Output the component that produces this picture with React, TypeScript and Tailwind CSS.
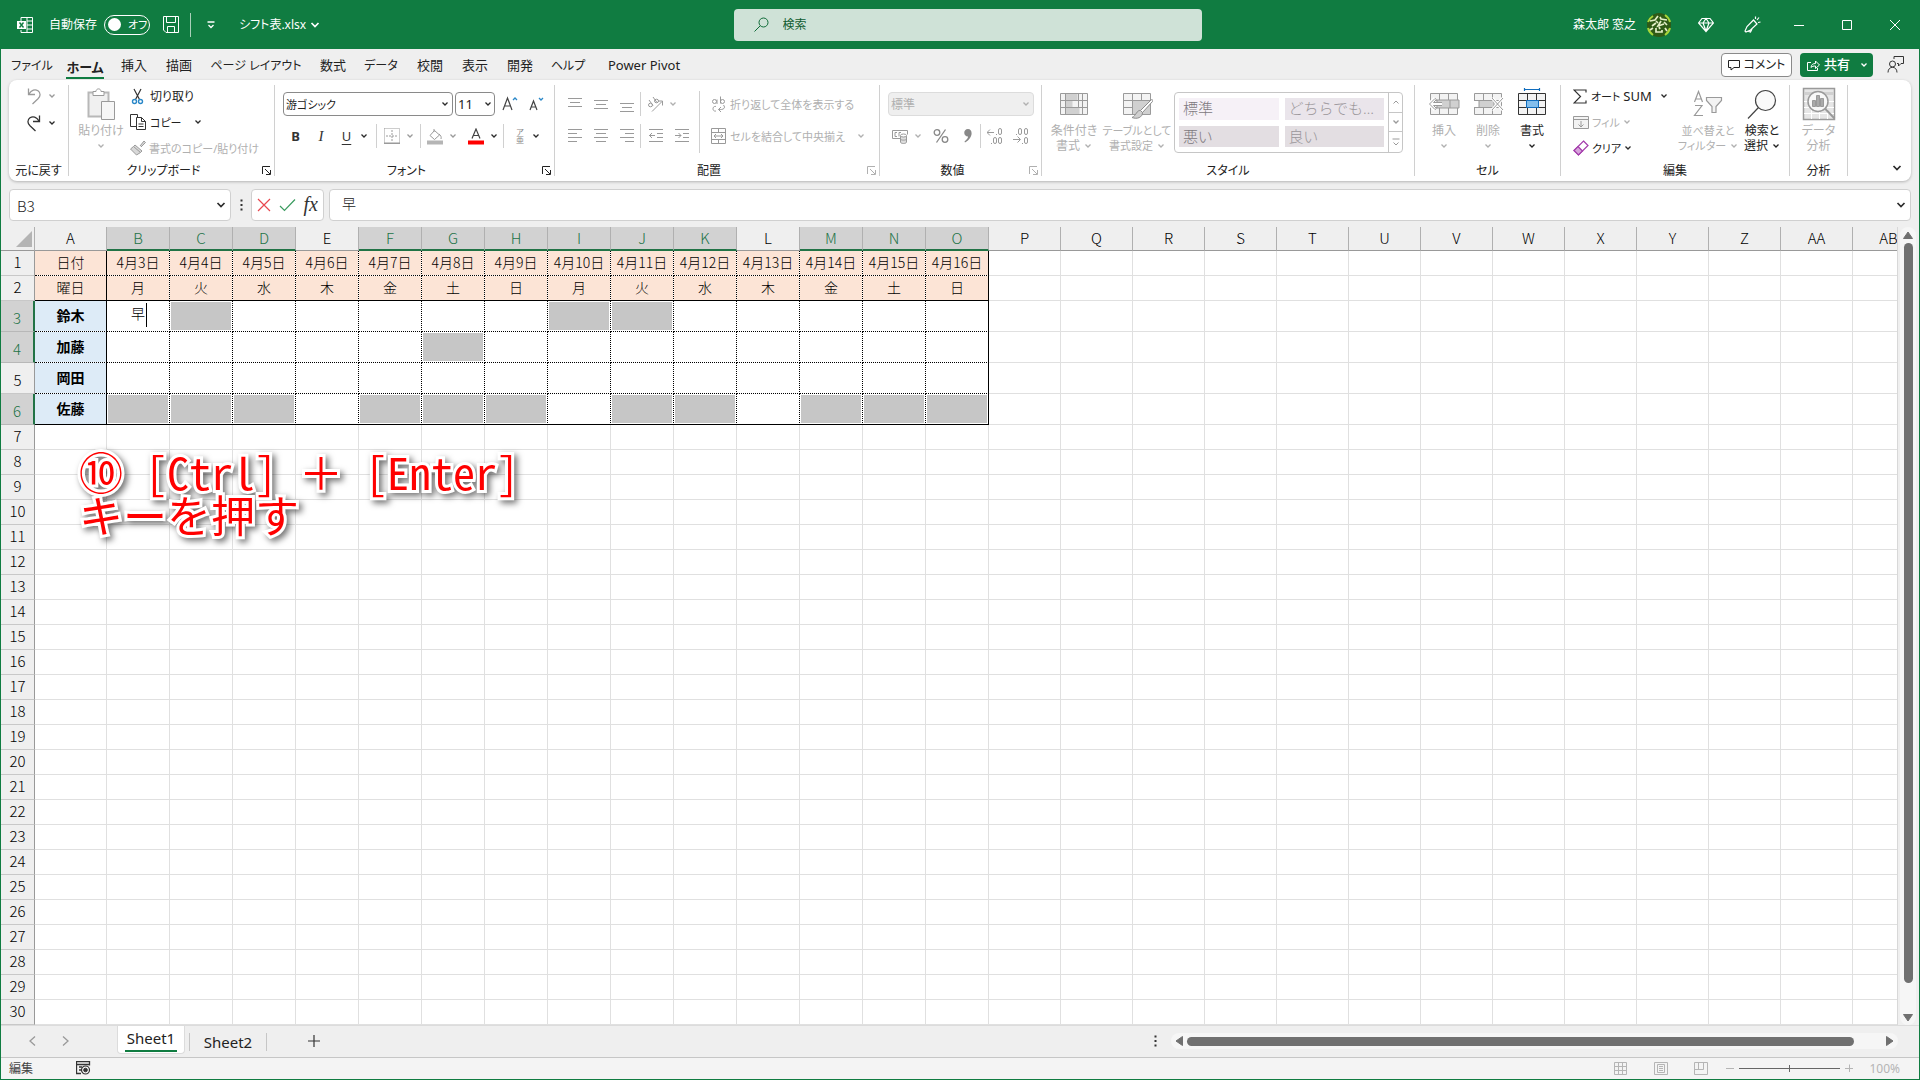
import React from "react";

type Kids = { children?: React.ReactNode };
const BLUE = "#2b88c8";

/* ---------- small shared pieces ---------- */

function Chevron({ className = "text-[#2b2b2b]" }: { className?: string }) {
  return (
    <svg width="8" height="6" viewBox="0 0 8 6" className={"shrink-0 " + className} fill="none" stroke="currentColor" strokeWidth="1.3" aria-hidden="true">
      <path d="M1.5 1.5 4 4l2.5-2.5" />
    </svg>
  );
}

function BigChevron({ className = "text-[#2b2b2b]" }: { className?: string }) {
  return (
    <svg width="10" height="8" viewBox="0 0 10 8" className={"shrink-0 " + className} fill="none" stroke="currentColor" strokeWidth="1.7" aria-hidden="true">
      <path d="M1.5 2 5 5.5 8.5 2" />
    </svg>
  );
}

function Ico({ w = 16, h = 16, className = "text-[#9a9a9a]", children }: Kids & { w?: number; h?: number; className?: string }) {
  return (
    <svg width={w} height={h} viewBox={`0 0 ${w} ${h}`} fill="none" stroke="currentColor" strokeWidth="1" className={"shrink-0 " + className} aria-hidden="true">
      {children}
    </svg>
  );
}

function Group({ label, width, launcher, children }: Kids & { label: string; width: string; launcher?: string }) {
  return (
    <>
      <section aria-label={label} className={"flex h-[101px] shrink-0 flex-col " + width}>
        <div className="h-[79px]">{children}</div>
        <div className="flex h-[22px] items-center">
          <span className="flex flex-1 justify-center whitespace-nowrap">{label}</span>
          {launcher && (
            <button aria-label={label + "の設定"} className={launcher}>
              <Ico w={9} h={9} className=""><path d="M.5 8V.5H8M3 3l5 5M8.500 4v4.500H4" /></Ico>
            </button>
          )}
        </div>
      </section>
      <div className="my-[5px] w-px shrink-0 bg-[#d0d0d0]" />
    </>
  );
}

function Lines({ rows, align }: { rows: number[]; align: "l" | "c" | "r" }) {
  return (
    <Ico w={14} h={16}>
      {rows.map((y, i) => {
        const short = i % 2 === 1;
        const x = !short ? 0 : align === "l" ? 0 : align === "c" ? 2 : 5;
        const e = !short ? 14 : align === "l" ? 9 : align === "c" ? 12 : 14;
        return <path key={y} d={`M${x} ${y}.5H${e}`} />;
      })}
    </Ico>
  );
}

function IconBtn({ label, className = "w-[26px]", children }: Kids & { label: string; className?: string }) {
  return (
    <button aria-label={label} className={"flex h-[24px] shrink-0 items-center justify-center gap-[6px] " + className}>
      {children}
    </button>
  );
}

function Sep() {
  return <span className="h-[24px] w-px shrink-0 bg-[#d0d0d0]" />;
}

function Big({ icon, lines, width, chev = "inline", className = "text-[#b0b0b0]" }: { icon: React.ReactNode; lines: string[]; width: string; chev?: "inline" | "below" | "none"; className?: string }) {
  return (
    <button className={"flex shrink-0 flex-col items-center whitespace-nowrap leading-[15px] " + width + " " + className}>
      <span className="flex h-[43px] items-center pt-[5px]">{icon}</span>
      {lines.map((l, i) => (
        <span key={l} className="flex items-center gap-1">
          {l}
          {chev === "inline" && i === lines.length - 1 && <Chevron className="" />}
        </span>
      ))}
      {chev === "below" && <span className="flex h-[15px] items-center"><Chevron className="" /></span>}
    </button>
  );
}

/* ---------- title bar ---------- */

function TitleBar() {
  return (
    <header className="flex h-[49px] shrink-0 items-center bg-[#107c41] text-white">
      <div className="flex flex-1 items-center pl-4">
        <Ico w={16} h={18} className="text-white">
          <path d="M4 4V1.500h11.500v15H4V14M4 6V4M10 1.500v15M10 5h5.500M10 9h5.500M10 13h5.500" />
          <path d="M0 5h9v8H0z" fill="white" stroke="none" />
          <path d="m2.500 6.500 4 5M6.500 6.500l-4 5" stroke="#107c41" strokeWidth="1.400" />
        </Ico>
        <label htmlFor="autosave" className="ml-4">自動保存</label>
        <button id="autosave" role="switch" aria-checked="false" className="ml-[7px] flex h-5 w-[46px] items-center gap-[7px] rounded-full border border-white pl-[3px] text-[11px]">
          <span className="size-[13px] rounded-full bg-white" />
          オフ
        </button>
        <button aria-label="保存" className="ml-[13px]">
          <Ico w={16} h={17} className="text-white"><path d="M.5.5h15v16H3L.5 14zM3.500.5v6h9v-6M4.500 16.500v-6h7v6" /></Ico>
        </button>
        <span className="ml-[11px] h-[24px] w-px bg-[#a9d0b9]" />
        <button aria-label="クイック アクセス ツール バーのカスタマイズ" className="ml-4">
          <Ico w={8} h={8} className="text-white"><path d="M.5 1h7M1.500 4 4 6.500 6.500 4" strokeWidth="1.300" /></Ico>
        </button>
        <button className="ml-[24px] flex items-center gap-1">
          シフト表.xlsx <BigChevron className="text-white" />
        </button>
      </div>
      <label className="ml-[18px] flex h-8 w-[468px] items-center gap-[14px] rounded bg-[#cfe2d7] pl-5 text-[#0f5c32]">
        <Ico w={15} h={15} className="text-[#0f6b38]"><circle cx="9.500" cy="5.500" r="4.500" /><path d="M6.200 8.800.5 14.500" /></Ico>
        <input aria-label="検索" placeholder="検索" className="flex-1 bg-transparent placeholder:text-[#0f5c32]" />
      </label>
      <div className="flex flex-1 items-center justify-end pr-[19px]">
        <span>森太郎 窓之</span>
        <svg width="24" height="24" viewBox="0 0 24 24" className="ml-[11px]" aria-label="アカウント">
          <circle cx="12" cy="12" r="12" fill="#2f5a16" />
          <path d="M1 9a12 12 0 0 1 5-6M18 2a12 12 0 0 1 5 7M23 15a12 12 0 0 1-5 7M6 22a12 12 0 0 1-5-7" stroke="#a6d63a" strokeWidth="2" fill="none" />
          <path d="M3 8l5-1 3-4M13 4l1 2 6 1M5 13l4-3M14 8l-3 5 6-2M17 9l3 3M9 8l2 2M3 17l3-2M9 15v4h6v-2M12 14l1 2M18 15l2 3" stroke="#e4efc8" strokeWidth="1.700" fill="none" />
        </svg>
        <button aria-label="プレミアム" className="ml-[27px]">
          <Ico w={16} h={16} className="text-white"><path d="M4 1.500h8L15.500 6 8 14.500.5 6zM.5 6h15M5 6l3 8 3-8-3-4.500z" strokeWidth="1.200" /></Ico>
        </button>
        <button aria-label="新機能" className="ml-[30px]">
          <Ico w={17} h={17} className="text-white"><path d="m9.500 4 3.500 4-6.500 6-4.500 2-1-1 2-4.500zM4.500 15.500l2 .5 1.500-3M11.500 3V.5M13 4l2-2.500M14 6.500l2.500-.5" strokeWidth="1.200" /></Ico>
        </button>
        <button aria-label="最小化" className="ml-[33px]"><Ico w={10} h={10} className="text-white"><path d="M0 5.500h10" /></Ico></button>
        <button aria-label="最大化" className="ml-[38px]"><Ico w={10} h={10} className="text-white"><path d="M.5.5h9v9h-9z" /></Ico></button>
        <button aria-label="閉じる" className="ml-[38px]"><Ico w={10} h={10} className="text-white"><path d="m0 0 10 10M10 0 0 10" /></Ico></button>
      </div>
    </header>
  );
}

/* ---------- ribbon tabs ---------- */

const TABS: [string, string][] = [
  ["ファイル", "w-[46px] text-[12px]"], ["ホーム", "w-[60px]"], ["挿入", "w-[38px]"], ["描画", "w-[52px]"], ["ページ レイアウト", "w-[102px] text-[12px]"], ["数式", "w-[52px]"],
  ["データ", "w-[44px] text-[12px]"], ["校閲", "w-[54px]"], ["表示", "w-[36px]"], ["開発", "w-[54px]"], ["ヘルプ", "w-[42px] text-[12px]"], ["Power Pivot", "w-[110px]"],
];

function TabRow() {
  return (
    <nav className="flex h-[31px] shrink-0 items-center pl-[8px] text-[13px]">
      {TABS.map(([t, w]) => (
        <button key={t} className={"flex h-[31px] items-center justify-center whitespace-nowrap " + w}>
          <span className={t === "ホーム" ? "border-b-2 border-[#107c41] pt-[7px] leading-[19px] font-bold" : "pt-px"}>{t}</span>
        </button>
      ))}
      <span className="flex-1" />
      <button className="flex h-6 w-[71px] items-center justify-center gap-1 rounded border border-[#8a8a8a] bg-white text-[12px]">
        <Ico w={12} h={12} className="text-[#222]"><path d="M.5 1.500h11v7H6l-3 2.500V8.500H.5z" /></Ico>
        コメント
      </button>
      <button className="mx-2 flex h-6 w-[73px] items-center rounded bg-[#107c41] pl-[7px] text-white">
        <Ico w={13} h={12} className="text-white"><path d="M4 3.500H.5v8h10V9M4 8.500c.3-3 2-4 4.500-4V2l4 4-4 3.500V7C6.500 7 5 7.300 4 8.500z" /></Ico>
        <span className="ml-1 font-medium">共有</span>
        <span className="ml-[10px]"><Chevron className="text-white" /></span>
      </button>
      <button aria-label="ユーザー" className="mr-[15px] ml-[6px]">
        <Ico w={17} h={17} className="text-[#333]"><circle cx="5.500" cy="8" r="3" /><path d="M1 16.500c0-7 9-7 9 0M7 3V.5h9.500v7H14L11.500 10V7.500H10" /></Ico>
      </button>
    </nav>
  );
}

/* ---------- ribbon ---------- */

function GridIcon({ cls = "text-[#9a9a9a]", children }: Kids & { cls?: string }) {
  return (
    <Ico w={32} h={32} className={cls}>
      <path d="M2.500 5.500h27v21h-27z" fill="#f3f3f3" />
      <path d="M2.500 12.500h27M2.500 19.500h27M11.500 5.500v21M20.500 5.500v21" strokeWidth="1" />
      {children}
    </Ico>
  );
}

const SCRIPT = "text-[#222] pr-[3px] pl-[4px]";
const SCRIPT_OFF = "text-[#b0b0b0] pr-[3px] pl-[4px]";

function Ribbon() {
  return (
    <div className="mr-[8px] ml-[8px] flex h-[101px] shrink-0 overflow-hidden rounded-lg bg-white shadow-[0_1px_3px_rgba(0,0,0,0.25)]">
      <Group label="元に戻す" width="w-[59px]">
        <div className="flex h-full flex-col pt-1 pl-[16px]">
          <IconBtn label="元に戻す" className="w-[32px]">
            <Ico w={16} h={17} className="text-[#9a9a9a]"><path d="M2.500.5v6H9M3 6C5.500 2 9 .8 12 2.800c3 2.200 2.500 5.500 0 8L6.500 16" strokeWidth="1.300" /></Ico>
            <Chevron className="text-[#9a9a9a]" />
          </IconBtn>
          <div className="mt-[3px]">
            <IconBtn label="やり直し" className="w-[32px]">
              <Ico w={16} h={17} className="text-[#333]"><path d="M13.500.5v6H7M13 6C10.500 2 7 .8 4 2.800c-3 2.200-2.500 5.500 0 8L9.500 16" strokeWidth="1.300" /></Ico>
              <Chevron />
            </IconBtn>
          </div>
        </div>
      </Group>

      <Group label="クリップボード" width="w-[205px]" launcher={SCRIPT}>
        <div className="flex pl-2">
          <Big
            width="w-[48px]" chev="below" lines={["貼り付け"]}
            icon={
              <Ico w={32} h={32}>
                <path d="M3.500 4.500h20v24h-20z" fill="#f0f0f0" stroke="#b8b8b8" strokeWidth="2" />
                <path d="M8 7.500v-4h3c0-3.500 5-3.500 5 0h3v4z" fill="#fff" />
                <path d="M16.500 13.500h13v18h-13z" fill="#f6f6f6" />
              </Ico>
            }
          />
          <div className="flex flex-col gap-[2px] pt-1 pl-[5px]">
            <button className="flex h-[24px] items-center gap-[4px]">
              <Ico w={16} h={17} className="text-[#333]">
                <path d="M4 1l5.500 10.500M11 1 5.500 11.500" strokeWidth="1.200" />
                <circle cx="4.500" cy="13.500" r="2" stroke={BLUE} strokeWidth="1.400" /><circle cx="10.500" cy="13.500" r="2" stroke={BLUE} strokeWidth="1.400" />
              </Ico>
              切り取り
            </button>
            <button className="flex h-[24px] items-center gap-[4px] text-[11px]">
              <Ico w={16} h={16} className="text-[#333]"><path d="M6 12.500H.5V.5h7V3M6.500 15.500v-12h5l4 4v8zM11.500 3.500v4h4M8.500 10h5M8.500 12.500h5" /></Ico>
              コピー <span className="ml-2"><Chevron /></span>
            </button>
            <button className="flex h-[24px] items-center gap-[3px] text-[11px] whitespace-nowrap text-[#b0b0b0]">
              <Ico w={16} h={16}><path d="m10 6 4-5 1.500 1.500L11 7M5 5l7 6-1.500 1.500L3.500 6.500zM3.500 6.500.5 9l6 6 4-2.500" fill="#d8d8d8" /></Ico>
              書式のコピー/貼り付け
            </button>
          </div>
        </div>
      </Group>

      <Group label="フォント" width="w-[279px]" launcher={SCRIPT}>
        <div className="flex flex-col gap-[8px] pt-3 pl-2">
          <div className="flex items-center">
            <label className="flex h-6 w-[170px] items-center rounded border border-[#8a8a8a] pr-[3px] pl-[2px]">
              <select aria-label="フォント名" className="flex-1 appearance-none text-[11px]"><option>游ゴシック</option></select><Chevron />
            </label>
            <label className="ml-[2px] flex h-6 w-[40px] items-center rounded border border-[#8a8a8a] pr-[2px] pl-[2px]">
              <select aria-label="フォント サイズ" className="w-[20px] flex-1 appearance-none text-[13px]"><option>11</option></select><Chevron />
            </label>
            <IconBtn label="フォント サイズの拡大" className="ml-[6px] w-[18px]">
              <Ico w={17} h={16} className="text-[#444]"><path d="m1 14 4.500-12L10 14M2.500 10h6" strokeWidth="1.200" /><path d="m11 4 2-2 2 2" stroke={BLUE} strokeWidth="1.300" /></Ico>
            </IconBtn>
            <IconBtn label="フォント サイズの縮小" className="ml-[8px] w-[18px]">
              <Ico w={17} h={16} className="text-[#444]"><path d="m2 14 3.500-9L9 14M3.500 11h4.500" strokeWidth="1.200" /><path d="m11 2 2 2 2-2" stroke={BLUE} strokeWidth="1.300" /></Ico>
            </IconBtn>
          </div>
          <div className="flex items-center text-[13px] text-[#333]">
            <IconBtn label="太字" className="w-[25px]"><b>B</b></IconBtn>
            <IconBtn label="斜体"><i className="font-['Liberation_Serif',serif] text-[15px]">I</i></IconBtn>
            <IconBtn label="下線" className="w-[42px]"><u className="mr-[3px] underline-offset-[3px]">U</u><Chevron /></IconBtn>
            <Sep />
            <IconBtn label="罫線" className="w-[43px]">
              <Ico w={16} h={16}><path d="M.5.5h15v15M.5.5v15" strokeDasharray="1 1" /><path d="M8 2v12M2 8h12" strokeDasharray="2 1" /><path d="M0 15.500h16" strokeWidth="2" /></Ico>
              <Chevron className="text-[#9a9a9a]" />
            </IconBtn>
            <Sep />
            <IconBtn label="塗りつぶしの色" className="w-[42px]">
              <Ico w={16} h={17}><path d="M7 1v3M3 7.500l4.500-5 5 4.500-5 4.500zM12 6c2 1.500 2.500 3 2 5" /><path d="M0 12.500h16v4H0z" fill="#b5b5b5" stroke="none" /></Ico>
              <Chevron className="text-[#9a9a9a]" />
            </IconBtn>
            <IconBtn label="フォントの色" className="w-[40px]">
              <Ico w={16} h={17} className="text-[#444]"><path d="M4 10.500 8 1l4 9.500M5.500 7.500h5" strokeWidth="1.200" /><path d="M0 12.500h16v4H0z" fill="#f00" stroke="none" /></Ico>
              <Chevron />
            </IconBtn>
            <Sep />
            <IconBtn label="ふりがな" className="w-[46px]">
              <span className="flex w-[12px] flex-col items-center text-[8px] leading-[8px] text-[#888]"><span>ア</span><span>亜</span></span>
              <Chevron />
            </IconBtn>
          </div>
        </div>
      </Group>

      <Group label="配置" width="w-[324px]" launcher={SCRIPT_OFF}>
        <div className="flex pt-3 text-[#b0b0b0]">
          <div className="flex w-[144px] flex-col gap-[8px] pl-[7px]">
            <div className="flex">
              <IconBtn label="上揃え"><Lines rows={[2, 6, 10]} align="c" /></IconBtn>
              <IconBtn label="上下中央揃え"><Lines rows={[4, 8, 12]} align="c" /></IconBtn>
              <IconBtn label="下揃え"><Lines rows={[7, 11, 15]} align="c" /></IconBtn>
              <Sep />
              <IconBtn label="方向" className="w-[42px]">
                <Ico w={16} h={16}>
                  <ellipse cx="3.500" cy="9" rx="2" ry="1.800" /><path d="M2 4l4 5.500M6 1l4 5.500" /><ellipse cx="9.500" cy="5" rx="2" ry="1.800" /><path d="M5 15.500 15 5.500M11 5h4.500v4.500" />
                </Ico>
                <Chevron className="" />
              </IconBtn>
            </div>
            <div className="flex">
              <IconBtn label="左揃え"><Lines rows={[1, 5, 9, 13]} align="l" /></IconBtn>
              <IconBtn label="中央揃え"><Lines rows={[1, 5, 9, 13]} align="c" /></IconBtn>
              <IconBtn label="右揃え"><Lines rows={[1, 5, 9, 13]} align="r" /></IconBtn>
              <Sep />
              <IconBtn label="インデントを減らす" className="ml-[2px] w-[26px]"><Ico w={14} h={16}><path d="M0 1.500h14M8 5.500h6M8 9.500h6M0 13.500h14M0 7.500h6M3 5 .5 7.500 3 10" /></Ico></IconBtn>
              <IconBtn label="インデントを増やす"><Ico w={14} h={16}><path d="M0 1.500h14M8 5.500h6M8 9.500h6M0 13.500h14M0 7.500h6M3.500 5 6 7.500 3.500 10" /></Ico></IconBtn>
            </div>
          </div>
          <span className="mt-[-1px] h-[62px] w-px bg-[#d0d0d0]" />
          <div className="flex flex-col gap-[8px] pl-[11px] text-[11px] whitespace-nowrap">
            <button className="flex h-6 items-center gap-[4px]">
              <Ico w={15} h={17}><circle cx="3.500" cy="5.500" r="2" /><path d="M6 3.500v4.500M9.500.5v7" /><circle cx="11.500" cy="5.500" r="2" /><path d="M5 10.500c-4-1-4 5.500 0 4.500M12.500 9c2.500 3 0 5-5 4.500M10 11l-2.500 2.500L10 16" /></Ico>
              折り返して全体を表示する
            </button>
            <button className="flex h-6 items-center gap-[4px]">
              <Ico w={15} h={16}><path d="M.5.5h14v15H.5zM.5 4.500h14M.5 11.500h14M7.500.5v4M7.500 11.500v4M3 8h9M5 6 3 8l2 2M10 6l2 2-2 2" /></Ico>
              セルを結合して中央揃え <span className="ml-[8px]"><Chevron className="" /></span>
            </button>
          </div>
        </div>
      </Group>

      <Group label="数値" width="w-[161px]" launcher={SCRIPT_OFF}>
        <div className="flex flex-col gap-[8px] pt-3 pl-2 text-[#b0b0b0]">
          <label className="flex h-6 w-[146px] items-center rounded border border-[#dcdcdc] bg-[#efefef] pr-[3px] pl-[2px]">
            <select aria-label="数値の書式" className="flex-1 appearance-none text-[#b0b0b0]"><option>標準</option></select><Chevron className="" />
          </label>
          <div className="flex items-center text-[#888]">
            <IconBtn label="通貨表示形式" className="w-[38px]">
              <Ico w={16} h={15}><path d="M8 9.500H.5v-8h15v4M5 3.500H3v4h2M7 7.500v-4h2" /><path d="M8.500 7v6c0 2 6 2 6 0V7M8.500 10c0 1.500 6 1.500 6 0" fill="#ddd" /><ellipse cx="11.500" cy="6.500" rx="3" ry="1.500" fill="#fff" /></Ico>
              <Chevron className="text-[#b0b0b0]" />
            </IconBtn>
            <IconBtn label="パーセント スタイル" className="w-[30px]">
              <Ico w={16} h={16} className="text-[#888]"><circle cx="4" cy="4.500" r="2.800" strokeWidth="1.300" /><circle cx="12" cy="11.500" r="2.800" strokeWidth="1.300" /><path d="M12.500 1.500 3.500 14.500" strokeWidth="1.300" /></Ico>
            </IconBtn>
            <IconBtn label="桁区切りスタイル" className="w-[24px]">
              <Ico w={10} h={14} className="text-[#888]"><path d="M5 0c5 0 5.500 9-3 13.500l-.5-1C4 10.500 5 9 5 7.500 0 7.500 0 0 5 0z" fill="#888" stroke="none" /></Ico>
            </IconBtn>
            <Sep />
            <IconBtn label="小数点以下の表示桁数を増やす" className="w-[28px]">
              <Ico w={16} h={16}><path d="M0 4.500h7M3 1.500l-3 3 3 3" /><rect x="11.500" y=".5" width="3" height="6" rx="1.500" /><rect x="6.500" y="9.500" width="3" height="6" rx="1.500" /><rect x="11.500" y="9.500" width="3" height="6" rx="1.500" /><path d="M9 6.500h1M4 15.500h1" /></Ico>
            </IconBtn>
            <IconBtn label="小数点以下の表示桁数を減らす" className="w-[24px]">
              <Ico w={16} h={16}><rect x="5.500" y=".5" width="3" height="6" rx="1.500" /><rect x="11.500" y=".5" width="3" height="6" rx="1.500" /><path d="M3 6.500h1M0 11.500h7M4.500 8.500l3 3-3 3M9 15.500h1" /><rect x="11.500" y="9.500" width="3" height="6" rx="1.500" /></Ico>
            </IconBtn>
          </div>
        </div>
      </Group>

      <Group label="スタイル" width="w-[372px]">
        <div className="flex">
          <Big
            width="ml-[2px] w-[60px]" lines={["条件付き", "書式"]}
            icon={<GridIcon><path d="M7.500 6h12v6h-12zM7.500 13h7v6h-7zM7.500 20h14v6h-14z" fill="#d0d0d0" stroke="none" /><path d="M7.500 5.500v21M24.500 5.500v21" /></GridIcon>}
          />
          <Big
            width="w-[66px] text-[11px]" lines={["テーブルとして", "書式設定"]}
            icon={<GridIcon><path d="M12 13h17v13H12z" fill="#d0d0d0" stroke="none" /><path d="m30 12-10.500 10.500 2 2L31.500 13.500c1-1.500-.5-2.500-1.500-1.500z" fill="#fff" stroke="#8c8c8c" /><path d="M19.500 22.500c-4-.5-4 5-8.500 7 5 2 10.500 0 10.500-5z" fill="#d0d0d0" stroke="#8c8c8c" /></GridIcon>}
          />
          <div className="mt-3 ml-[4px] flex h-[61px] w-[229px] overflow-hidden rounded border border-[#c6c6c6] text-[15px] font-light">
            <div className="grid flex-1 grid-cols-2 gap-[6px] p-1 pt-[5px] pb-[5px] text-left text-[#9a969a]">
              <button className="truncate bg-[#f6f1f7] pb-[2px] pl-1 text-left leading-[20px] text-[#7d787d]">標準</button>
              <button className="truncate bg-[#eae5eb] pb-[2px] pl-1 text-left leading-[20px] [font-feature-settings:normal]">どちらでも…</button>
              <button className="truncate bg-[#e3dee2] pb-[2px] pl-1 text-left leading-[20px] text-[#7d787d]">悪い</button>
              <button className="truncate bg-[#e3dee2] pb-[2px] pl-1 text-left leading-[20px]">良い</button>
            </div>
            <div className="grid w-[14px] grid-rows-3 divide-y divide-[#c6c6c6] border-l border-[#c6c6c6] text-[#9a9a9a]">
              <button aria-label="上へ" className="flex items-center justify-center"><Ico w={8} h={6} className=""><path d="M1.500 4.500 4 2l2.500 2.500" /></Ico></button>
              <button aria-label="下へ" className="flex items-center justify-center"><Chevron className="" /></button>
              <button aria-label="その他" className="flex items-center justify-center"><Ico w={8} h={8} className=""><path d="M.5 1h7M1.500 4.500 4 7l2.500-2.500" /></Ico></button>
            </div>
          </div>
        </div>
      </Group>

      <Group label="セル" width="w-[145px]">
        <div className="flex pl-[7px]">
          <Big
            width="w-[44px]" chev="below" lines={["挿入"]}
            icon={<GridIcon><path d="M9 12h22v8H9z" fill="#d0d0d0" /><path d="M22 12v8" /><path d="M14 16H2M7 10.500 1.500 16 7 21.500" stroke="#fff" strokeWidth="4" /><path d="M14 14.500H5.500l3-3-1.500-1L1.500 16 7 21.500l1.500-1-3-3H14" fill="#fff" /></GridIcon>}
          />
          <Big
            width="w-[44px]" chev="below" lines={["削除"]}
            icon={<GridIcon><path d="M0 13h7v6H0z" fill="#fff" stroke="none" /><path d="M7 12.500h15v7H7z" fill="#d0d0d0" /><path d="m20 10 11 12M31 10 20 22" stroke="#fff" strokeWidth="3" /><path d="m20 10 11 12M31 10 20 22" /></GridIcon>}
          />
          <Big
            width="w-[44px]" chev="below" lines={["書式"]} className="text-[#222]"
            icon={<GridIcon cls="text-[#333]"><path d="M10.500 12.500h12v7h-12z" fill="#83beec" stroke="#0f6cbd" /><path d="M8.500 1.500h15M8.500 0v3M23.500 0v3" stroke="#0f6cbd" strokeWidth="1.200" /></GridIcon>}
          />
        </div>
      </Group>

      <Group label="編集" width="w-[228px]">
        <div className="flex">
          <div className="flex w-[120px] flex-col gap-[2px] pt-1 pl-[12px]">
            <button className="flex h-[24px] items-center gap-[4px] text-[11px] whitespace-nowrap">
              <Ico w={14} h={15} className="text-[#333]"><path d="M13 3.500V1H1l6.500 6.500L1 14h12v-2.500" strokeWidth="1.200" /></Ico>
              <span>オート <span className="text-[13px]">SUM</span></span> <span className="ml-[4px]"><Chevron /></span>
            </button>
            <button className="flex h-[24px] items-center gap-[3px] text-[11px] text-[#b0b0b0]">
              <Ico w={16} h={15}><path d="M.5 1.500h15v12H.5z" fill="#f3f3f3" /><path d="M.5 4.500h15M8 6v6M5.500 9.500 8 12l2.500-2.500" /></Ico>
              フィル <Chevron className="" />
            </button>
            <button className="flex h-[24px] items-center gap-[3px] text-[11px]">
              <Ico w={16} h={16} className="text-[#a33bab]"><path d="m10.500 1 4.500 4.500L5.500 15 1 10.500z" fill="#fff" strokeWidth="1.200" /><path d="m5 6.500 4.500 4.500-4 4L1 10.500z" fill="#d6a3da" strokeWidth="1.200" /></Ico>
              クリア <Chevron />
            </button>
          </div>
          <Big
            width="w-[54px] text-[11px]" lines={["並べ替えと", "フィルター"]}
            icon={<Ico w={30} h={32}><path d="m1.500 14 4-10.500 4 10.500M3 11h5M2 17.500h7l-7.500 10h8.500" strokeWidth="1.200" /><path d="M13.500 9.500h15v3l-5.500 6v6h-4v-6l-5.500-6z" fill="#f3f3f3" strokeWidth="1.200" /></Ico>}
          />
          <Big
            width="w-[54px]" lines={["検索と", "選択"]} className="text-[#222]"
            icon={<Ico w={32} h={32} className="text-[#444]"><circle cx="19.500" cy="12.500" r="10" fill="#fafafa" strokeWidth="1.200" /><path d="M12.500 19.500 2 30.500" strokeWidth="1.200" /></Ico>}
          />
        </div>
      </Group>

      <Group label="分析" width="w-[57px]">
        <Big
          width="w-full" chev="none" lines={["データ", "分析"]}
          icon={
            <Ico w={34} h={34}>
              <path d="M1.500 1.500h31v31h-31z" fill="#e6e6e6" strokeWidth="1.500" /><path d="M2 6.500h30" strokeWidth="3" stroke="#d0d0d0" /><path d="M2 14.500h30M2 20.500h30M2 26.500h30M9.500 22v10M17.500 22v10M25.500 22v10" stroke="#fff" />
              <circle cx="16" cy="14.500" r="10" fill="#f8f8f8" strokeWidth="1.500" /><path d="M23 21.500 32.500 31.500" strokeWidth="2" /><path d="M10.500 13.500h3v6h-3zM14.500 8.500h3v11h-3zM18.500 11.500h3v8h-3z" fill="#aaa" />
            </Ico>
          }
        />
      </Group>

      <div className="flex flex-1 items-end justify-end pr-[9px] pb-[9px]">
        <button aria-label="リボンを折りたたむ"><BigChevron /></button>
      </div>
    </div>
  );
}

/* ---------- formula bar ---------- */

function Dots() {
  return <Ico w={3} h={12} className="text-[#333]"><path d="M.5.500h2v2h-2zM.5 5h2v2h-2zM.5 9.500h2v2h-2z" fill="currentColor" stroke="none" /></Ico>;
}

function FormulaBar() {
  return (
    <div className="flex shrink-0 items-center px-[8px] pt-2 pb-[6px]">
      <label className="flex h-8 w-[222px] items-center rounded border border-[#d0d0d0] bg-white pr-[4px] pl-[7px]">
        <input aria-label="名前ボックス" defaultValue="B3" className="min-w-0 flex-1 bg-transparent font-['Noto_Sans_CJK_JP',sans-serif] text-[15px] font-light" />
        <BigChevron />
      </label>
      <span className="flex w-[20px] justify-center"><Dots /></span>
      <div className="flex h-8 w-[73px] items-center justify-between rounded border border-[#d0d0d0] bg-white px-[5px]">
        <button aria-label="キャンセル"><Ico w={14} h={14} className="text-[#e8484f]"><path d="m1 1 12 12M13 1 1 13" strokeWidth="1.200" /></Ico></button>
        <button aria-label="入力"><Ico w={17} h={14} className="text-[#3a9b5f]"><path d="m1 8 4.500 4.500L16 1.500" strokeWidth="1.200" /></Ico></button>
        <button aria-label="関数の挿入" className="pb-[2px] font-['Liberation_Serif',serif] text-[20px] leading-none text-[#333] italic">fx</button>
      </div>
      <label className="ml-[5px] flex h-8 flex-1 items-center rounded border border-[#d0d0d0] bg-white pr-[4px] pl-[12px]">
        <input aria-label="数式バー" defaultValue="早" className="min-w-0 flex-1 bg-transparent pb-1 text-[14px] font-light" />
        <BigChevron />
      </label>
    </div>
  );
}

/* ---------- worksheet ---------- */

const COLS = "A B C D E F G H I J K L M N O P Q R S T U V W X Y Z AA AB".split(" ");
const LAST = COLS.indexOf("O");
const SELECTED: Record<number, string[]> = {
  3: ["C", "I", "J"],
  4: ["G"],
  6: ["B", "C", "D", "F", "G", "H", "J", "K", "M", "N", "O"],
};
const SEL_COLS = Object.values(SELECTED).flat();
const WEEK = ["月", "火", "水", "木", "金", "土", "日"];
const NAMES: Record<number, string> = { 1: "日付", 2: "曜日", 3: "鈴木", 4: "加藤", 5: "岡田", 6: "佐藤" };

function cellText(r: number, c: number) {
  if (c === 0) return NAMES[r] ?? "";
  if (c > LAST) return "";
  if (r === 1) return `4月${c + 2}日`;
  if (r === 2) return WEEK[(c - 1) % 7];
  return "";
}

function cellClass(r: number, c: number) {
  const inside = r <= 6 && c <= LAST;
  if (!inside) return "border-r border-b border-[#e0e0e0]";
  let s = "border-r border-b border-black bg-clip-padding ";
  s += c === 0 || c === LAST ? "" : "[border-right-style:dotted] ";
  s += r === 2 || r === 6 ? "" : "[border-bottom-style:dotted] ";
  if (r <= 2) s += "bg-[#fce4d6] ";
  else if (c === 0) s += "bg-[#ddebf7] font-bold text-[14px] ";
  if (SELECTED[r]?.includes(COLS[c])) s += "bg-[#c6c6c6] shadow-[inset_0_0_0_1px_white] ";
  return s;
}

function Sheet() {
  return (
    <table className="w-[1924px] table-fixed border-separate border-spacing-0 text-center text-[14px] font-light text-black">
      <colgroup>
        <col className="w-[34px]" />
        {COLS.map((c, i) => <col key={c} className={i === 0 || i > LAST ? "w-[72px]" : "w-[63px]"} />)}
      </colgroup>
      <thead>
        <tr className="h-6 bg-[#efefef] text-[15px] leading-[18px]">
          <th className="border-r border-b border-r-[#b0b0b0] border-b-[#999] p-0">
            <svg width="16" height="16" viewBox="0 0 16 16" className="ml-auto mr-[2px]" aria-hidden="true"><path d="M16 0v16H0z" fill="#b4b4b4" /></svg>
          </th>
          {COLS.map((c) => (
            <th
              key={c}
              scope="col"
              className={
                SEL_COLS.includes(c)
                  ? "border-r border-b-2 border-r-[#b0b0b0] border-b-[#217346] bg-[#d2d2d2] p-0 pb-px font-light text-[#217346]"
                  : "border-r border-b border-r-[#b0b0b0] border-b-[#999] p-0 pb-[2px] font-light"
              }
            >
              {c}
            </th>
          ))}
        </tr>
      </thead>
      <tbody>
        {Array.from({ length: 30 }, (_, i) => i + 1).map((r) => (
          <tr key={r} className={r >= 3 && r <= 6 ? "h-[31px]" : "h-[25px]"}>
            <th
              scope="row"
              className={
                r === 3 || r === 4 || r === 6
                  ? "border-r-2 border-b border-r-[#217346] border-b-[#b8b8b8] bg-[#d2d2d2] p-0 pt-[3px] text-[15px] leading-[18px] font-light text-[#217346]"
                  : r === 5
                    ? "border-r border-b border-r-[#999] border-b-[#c8c8c8] bg-[#efefef] p-0 pt-[3px] text-[15px] leading-[18px] font-light"
                    : "border-r border-b border-r-[#999] border-b-[#c8c8c8] bg-[#efefef] p-0 pb-[2px] text-[15px] leading-[18px] font-light"
              }
            >
              {r}
            </th>
            {COLS.map((c, ci) => (
              <td key={c} className={"p-0 pb-[2px] leading-[18px] whitespace-nowrap " + cellClass(r, ci)}>
                {r === 3 && c === "B" ? <span className="inline-block border-r border-black pr-px pb-1 pl-[2px] leading-[20px]">早</span> : cellText(r, ci)}
              </td>
            ))}
          </tr>
        ))}
      </tbody>
    </table>
  );
}

function Callout() {
  return (
    <p className="absolute top-[223px] left-[78px] text-[44px] leading-[43px] font-normal whitespace-pre text-[#ff0000] [filter:drop-shadow(3px_3px_3px_rgba(0,0,0,0.55))] [paint-order:stroke_fill] [-webkit-text-stroke:6px_white]">
      <span className="block">
        <span className="[font-feature-settings:'hwid']">⑩ [Ctrl] </span>＋<span className="[font-feature-settings:'hwid']"> [Enter]</span>
      </span>
      <span className="block">キーを押す</span>
    </p>
  );
}

function Worksheet() {
  return (
    <main className="flex flex-1">
      <div className="relative min-w-0 flex-1 overflow-hidden border-r border-[#d8d8d8] bg-white">
        <Sheet />
        <Callout />
      </div>
      <div className="mr-[3px] ml-[2px] flex w-4 flex-col items-center rounded-full bg-[#f6f6f6] pt-[4px] pb-[3px]">
        <Ico w={10} h={8} className="text-[#707070]"><path d="M5 1 9.500 7.500h-9z" fill="currentColor" /></Ico>
        <div className="mt-1 mb-[31px] w-[9px] flex-1 rounded-full bg-[#707070]" />
        <Ico w={10} h={8} className="text-[#707070]"><path d="M5 7 .5.500h9z" fill="currentColor" /></Ico>
      </div>
    </main>
  );
}

/* ---------- bottom bars ---------- */

function SheetTabs() {
  return (
    <div className="flex h-[33px] shrink-0 items-start border-t border-b border-t-[#dcdcdc] border-b-[#c6c6c6] text-[15px]">
      <div className="flex h-[30px] w-[116px] items-center gap-[26px] pl-[28px]">
        <button aria-label="前のシート"><Ico w={7} h={10} className="text-[#999]"><path d="M6 .5 1 5l5 4.500" strokeWidth="1.300" /></Ico></button>
        <button aria-label="次のシート"><Ico w={7} h={10} className="text-[#999]"><path d="m1 .5 5 4.500-5 4.500" strokeWidth="1.300" /></Ico></button>
      </div>
      <button className="h-[28px] w-[68px] rounded-b border border-t-0 border-[#dcdcdc] bg-white px-[7px]">
        <span className="block border-b-2 border-[#107c41] pb-[2px] leading-[20px]">Sheet1</span>
      </button>
      <span className="mt-[7px] ml-[4px] h-[18px] w-px bg-[#c6c6c6]" />
      <button className="h-[31px] w-[76px] leading-[28px]">Sheet2</button>
      <span className="mt-[7px] h-[18px] w-px bg-[#c6c6c6]" />
      <button aria-label="新しいシート" className="mt-[9px] ml-[41px]"><Ico w={12} h={12} className="text-[#333]"><path d="M6 0v12M0 6h12" strokeWidth="1.200" /></Ico></button>
      <div className="ml-auto flex h-[30px] w-[765px] items-center">
        <Dots />
        <div className="ml-[14px] mr-[21px] flex h-4 flex-1 items-center rounded-full bg-[#f6f6f6] px-[4px]">
          <Ico w={8} h={10} className="text-[#707070]"><path d="M1 5 7.500.500v9z" fill="currentColor" /></Ico>
          <div className="mr-[32px] ml-[4px] h-[9px] flex-1 rounded-full bg-[#707070]" />
          <Ico w={8} h={10} className="text-[#707070]"><path d="M7 5 .5.500v9z" fill="currentColor" /></Ico>
        </div>
      </div>
    </div>
  );
}

function StatusBar() {
  return (
    <footer className="flex h-[21px] shrink-0 items-center bg-[#f4f4f4] pr-[19px] pb-px pl-2 text-[#444]">
      <span>編集</span>
      <button aria-label="マクロの記録" className="ml-[43px]">
        <Ico w={15} h={14} className="text-[#333]"><path d="M5 12.500H.5v-12h13v4M.5 3.500h13M3 6h3M3 9h2" strokeWidth="1.300" /><circle cx="9.500" cy="9" r="4" strokeWidth="1.200" /><circle cx="9.500" cy="9" r="1.800" fill="#333" /></Ico>
      </button>
      <div className="ml-auto flex items-center text-[#b5b5b5]">
        <button aria-label="標準"><Ico w={13} h={13} className=""><path d="M.5.500h12v12H.5zM.5 4.500h12M.5 8.500h12M4.500.500v12M8.500.500v12" /></Ico></button>
        <button aria-label="ページ レイアウト" className="ml-[27px]"><Ico w={14} h={13} className=""><path d="M.5.500h13v12H.5zM3.500 2.500h7v8h-7zM5 4.500h4M5 6.500h4M5 8.500h4" /></Ico></button>
        <button aria-label="改ページ プレビュー" className="ml-[26px]"><Ico w={14} h={13} className=""><path d="M.5.500h13v12H.5zM.5 7.500h9v-7M4.500.500v7" /></Ico></button>
        <button aria-label="縮小" className="ml-[18px]"><Ico w={8} h={8} className=""><path d="M0 4.500h8" /></Ico></button>
        <input
          type="range" aria-label="ズーム" min="10" max="190" defaultValue="100"
          className="mx-[5px] h-[9px] w-[101px] appearance-none bg-[linear-gradient(#666,#666)] bg-[length:100%_1px] bg-center bg-no-repeat [&::-webkit-slider-thumb]:h-[7px] [&::-webkit-slider-thumb]:w-px [&::-webkit-slider-thumb]:appearance-none [&::-webkit-slider-thumb]:bg-[#666]"
        />
        <button aria-label="拡大"><Ico w={8} h={8} className=""><path d="M0 4.500h8M4.500.500v8" /></Ico></button>
        <span className="ml-[13px] w-[34px] text-right">100%</span>
      </div>
    </footer>
  );
}

export default function App() {
  return (
    <div className="flex min-h-screen flex-col overflow-hidden border border-t-0 border-[#107c41] bg-[#efefef] font-['Noto_Sans','Noto_Sans_CJK_JP',sans-serif] text-[12px] leading-[15px] text-[#222] [font-feature-settings:'palt']">
      <TitleBar />
      <TabRow />
      <Ribbon />
      <FormulaBar />
      <div className="flex flex-1 flex-col font-['Noto_Sans_CJK_JP',sans-serif] [font-feature-settings:normal]">
        <Worksheet />
      </div>
      <SheetTabs />
      <StatusBar />
    </div>
  );
}
